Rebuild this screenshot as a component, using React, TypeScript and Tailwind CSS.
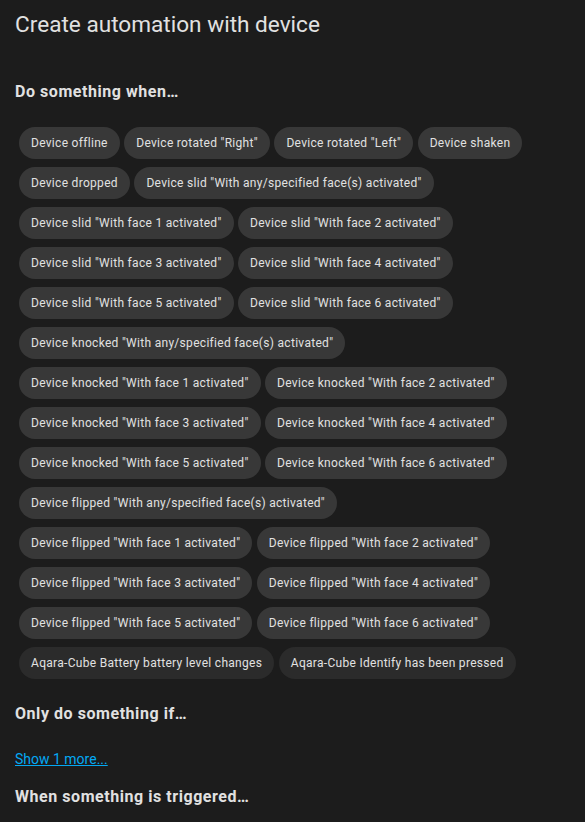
import React from 'react';

const triggers = [
  'Device offline',
  'Device rotated "Right"',
  'Device rotated "Left"',
  'Device shaken',
  'Device dropped',
  'Device slid "With any/specified face(s) activated"',
  'Device slid "With face 1 activated"',
  'Device slid "With face 2 activated"',
  'Device slid "With face 3 activated"',
  'Device slid "With face 4 activated"',
  'Device slid "With face 5 activated"',
  'Device slid "With face 6 activated"',
  'Device knocked "With any/specified face(s) activated"',
  'Device knocked "With face 1 activated"',
  'Device knocked "With face 2 activated"',
  'Device knocked "With face 3 activated"',
  'Device knocked "With face 4 activated"',
  'Device knocked "With face 5 activated"',
  'Device knocked "With face 6 activated"',
  'Device flipped "With any/specified face(s) activated"',
  'Device flipped "With face 1 activated"',
  'Device flipped "With face 2 activated"',
  'Device flipped "With face 3 activated"',
  'Device flipped "With face 4 activated"',
  'Device flipped "With face 5 activated"',
  'Device flipped "With face 6 activated"',
];

const entityTriggers = ['Aqara-Cube Battery battery level changes', 'Aqara-Cube Identify has been pressed'];

const Chip = ({ label, dim }: { label: string; dim?: boolean }) => (
  <button
    className={`h-8 px-3 rounded-full text-[12px] tracking-[0.3px] text-[#e1e1e1] whitespace-nowrap ${dim ? 'bg-[#2b2b2b]' : 'bg-[#383838]'}`}
  >
    {label}
  </button>
);

export default function App() {
  return (
    <div
      className="w-[585px] h-[822px] bg-[#1c1c1c] text-[#e1e1e1] overflow-hidden"
      style={{ fontFamily: 'Roboto, "Noto Sans", sans-serif' }}
    >
      <h1 className="px-[15px] pt-[9px] text-[22.6px] leading-8 font-normal">Create automation with device</h1>

      <h3 className="px-[15px] mt-[41px] text-[16px] tracking-[0.55px] leading-5 font-bold">Do something when…</h3>

      {/* device triggers */}
      <div className="mt-[25px] pl-[19px] pr-[20px] flex flex-wrap gap-x-[4.5px] gap-y-2">
        {triggers.map((t) => (
          <Chip key={t} label={t} />
        ))}
        {entityTriggers.map((t) => (
          <Chip key={t} label={t} dim />
        ))}
      </div>

      <h3 className="px-[15px] mt-[25px] text-[16px] tracking-[0.55px] leading-5 font-bold">Only do something if…</h3>

      <a href="#" className="block px-[15px] mt-[25px] text-[14px] leading-5 text-[#03a9f4] underline">
        Show 1 more...
      </a>

      <h3 className="px-[15px] mt-[18px] text-[16px] tracking-[0.55px] leading-5 font-bold">When something is triggered…</h3>
    </div>
  );
}
